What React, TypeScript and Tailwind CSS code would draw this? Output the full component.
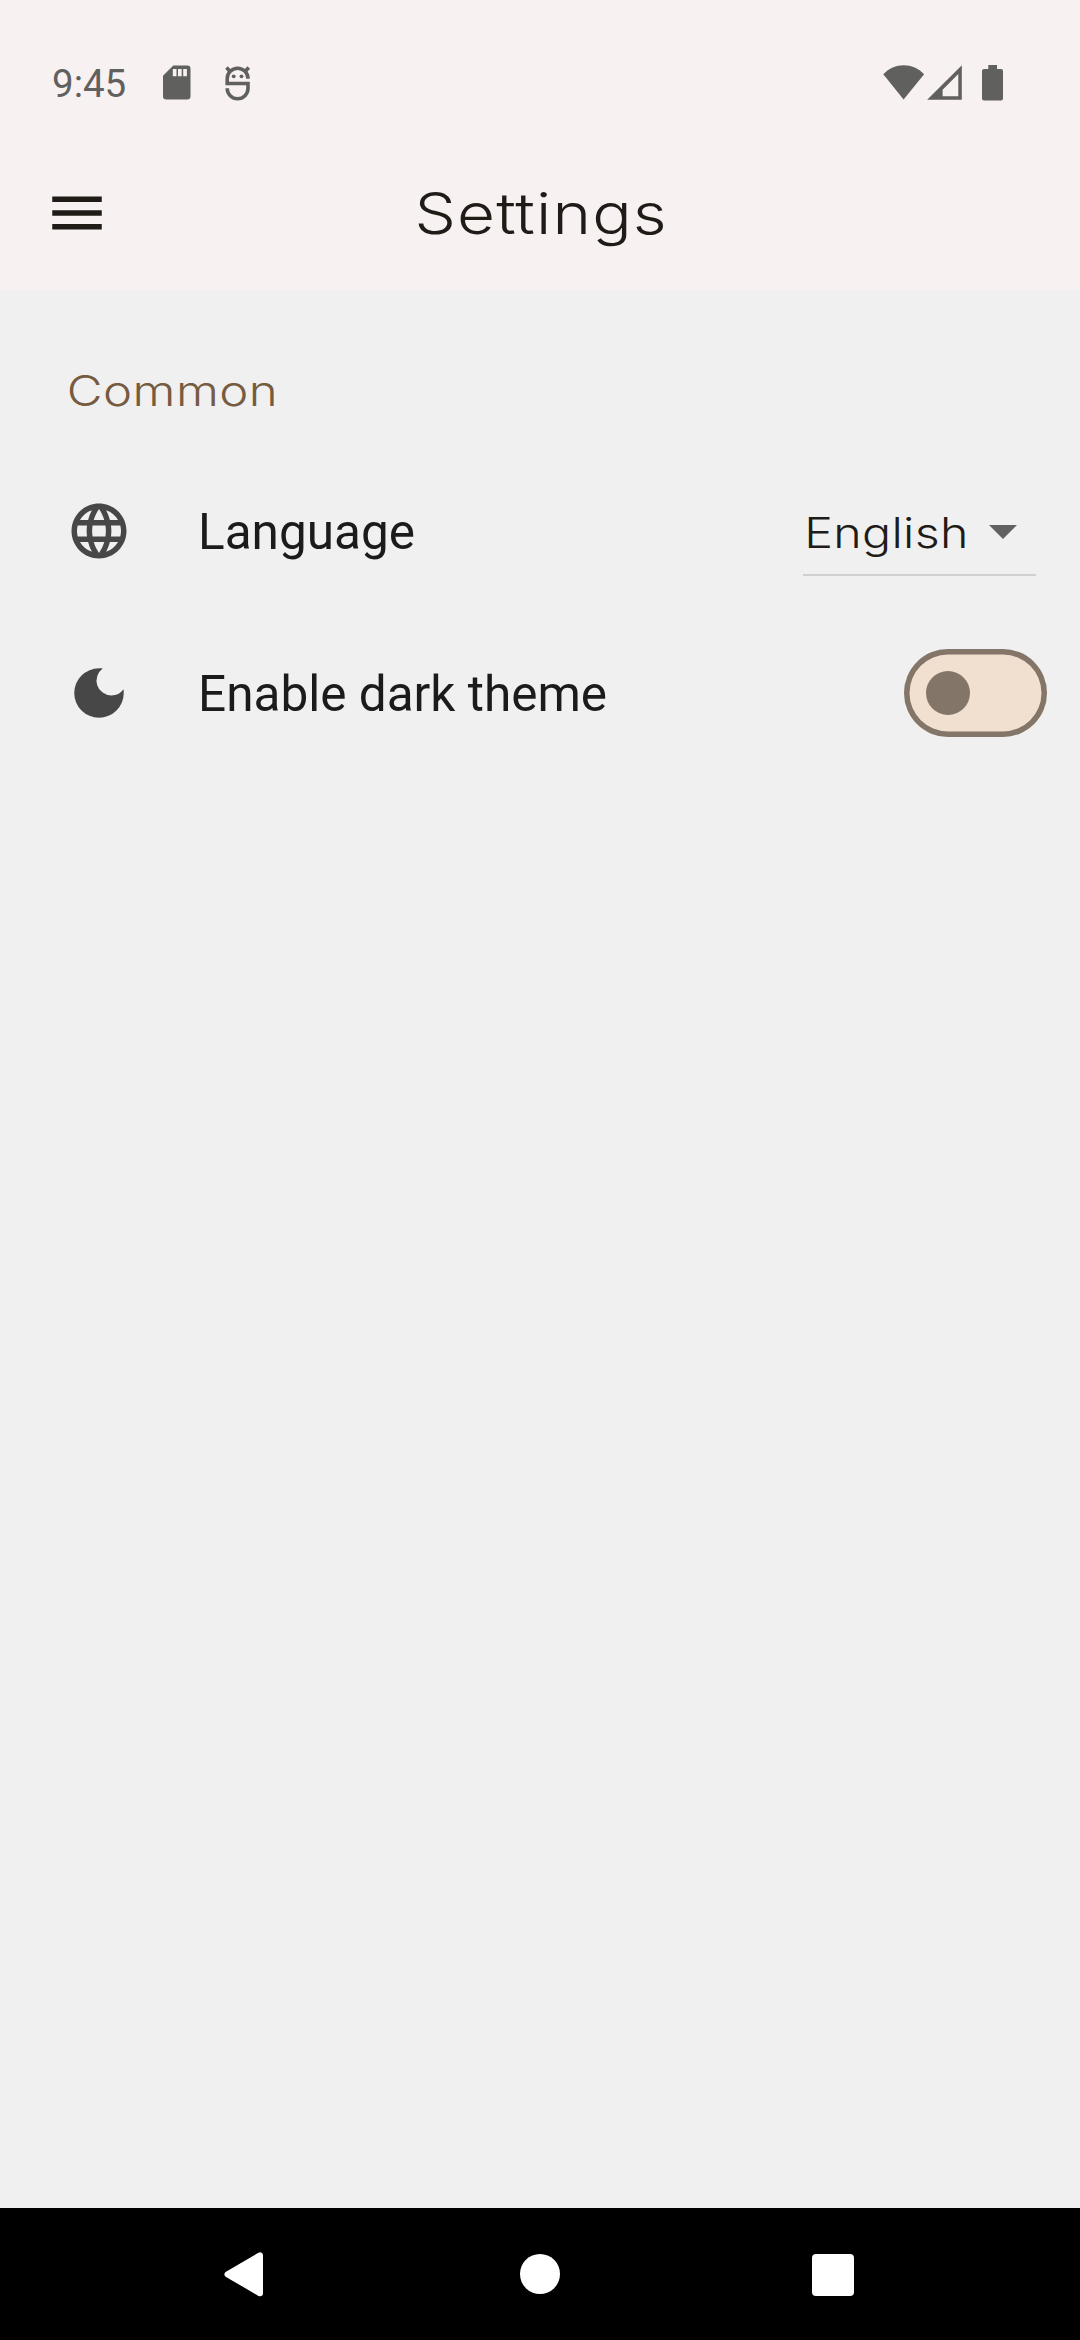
import { useState } from 'react';

function StatusBar() {
  return (
    <div className="flex h-[132px] items-start pt-[58px] pl-[52px] text-[#60605e]">
      <span className="w-[96px] font-[Roboto,sans-serif] text-[38.5px] leading-[52px]">9:45</span>
      <svg className="mt-[4px] ml-[7px] h-[42px] w-[42px]" viewBox="0 0 42 42" fill="currentColor">
        <path fillRule="evenodd" d="M18.3 3.5h14a3.2 3.2 0 0 1 3.2 3.2v27.600a3.200 3.200 0 0 1-3.200 3.200H11.200A3.200 3.200 0 0 1 8 34.300V13.800ZM17.800 7v7.200h3.700V7Zm5.200 0v7.200h3.700V7Zm5.200 0v7.200h3.700V7Z" />
      </svg>
      <svg className="mt-[7px] ml-[25px] h-[38px] w-[30px]" viewBox="0 0 30 38" fill="none" stroke="currentColor" strokeWidth="3.600">
        <path d="M26 13.700A10.400 10.400 0 0 0 5.200 13.700V18.500H26V23.300A10.400 10.400 0 0 1 5.200 23.300" />
        <path d="M4.500 2.500 8 6.500M26.700 2.500 23.200 6.500" />
        <circle cx="11.700" cy="11.300" r="1.900" fill="currentColor" stroke="none" />
        <circle cx="19.500" cy="11.300" r="1.900" fill="currentColor" stroke="none" />
      </svg>
      <svg className="mt-[7px] ml-auto h-[36px] w-[42px]" viewBox="0 0 42 36" fill="currentColor">
        <path d="M.3 9.200C6 3.500 13 .3 20.600.3S35.500 3.500 41.100 9.200L20.600 34.400Z" />
      </svg>
      <svg className="mt-[7px] ml-[2px] h-[36px] w-[36px]" viewBox="0 0 36 36" fill="currentColor">
        <path fillRule="evenodd" d="M34.800.2V34.800H.2ZM31.300 9 15.600 24.700V31.300H31.300Z" />
      </svg>
      <svg className="mt-[7px] mr-[76px] ml-[19px] h-[36px] w-[22px]" viewBox="0 0 22 36" fill="currentColor">
        <path d="M6.300 0H15V4H19a2 2 0 0 1 2 2V33.500a2 2 0 0 1-2 2H2a2 2 0 0 1-2-2V6A2 2 0 0 1 2 4H6.300Z" />
      </svg>
    </div>
  );
}

function AppBar() {
  return (
    <header className="grid h-[158px] grid-cols-[132px_1fr_132px] items-center text-[#1f1b16]">
      <button aria-label="Open menu" className="mt-[4px] ml-[44px] h-[66px] w-[66px]">
        <svg viewBox="0 0 24 24" fill="currentColor" className="h-full w-full">
          <path d="M3 18h18v-2H3v2zm0-5h18v-2H3v2zm0-7v2h18V6H3z" />
        </svg>
      </button>
      <h1 className="mt-[5px] scale-x-115 pl-[2px] text-center font-[Inter,sans-serif] text-[57px] leading-[70px] font-light tracking-[1px] whitespace-nowrap">
        Settings
      </h1>
    </header>
  );
}

function LanguageRow() {
  return (
    <div className="flex h-[162px] items-center pr-[44px] pl-[66px]">
      <svg viewBox="0 0 24 24" fill="#474747" className="h-[66px] w-[66px]">
        <path d="M11.990 2C6.470 2 2 6.480 2 12s4.470 10 9.990 10C17.520 22 22 17.520 22 12S17.520 2 11.990 2zm6.930 6h-2.950a15.650 15.650 0 0 0-1.380-3.560A8.030 8.030 0 0 1 18.920 8zM12 4.040c.83 1.200 1.480 2.530 1.910 3.960h-3.820c.43-1.430 1.080-2.760 1.910-3.960zM4.260 14C4.100 13.360 4 12.690 4 12s.1-1.360.26-2h3.380c-.08.66-.14 1.320-.14 2s.06 1.340.14 2H4.260zm.82 2h2.950c.32 1.250.78 2.450 1.380 3.560A7.987 7.987 0 0 1 5.080 16zm2.950-8H5.080a7.987 7.987 0 0 1 4.330-3.560A15.650 15.650 0 0 0 8.030 8zM12 19.960c-.83-1.200-1.480-2.530-1.910-3.960h3.820c-.43 1.430-1.080 2.760-1.910 3.960zM14.340 14H9.660c-.09-.66-.16-1.320-.16-2s.07-1.350.16-2h4.680c.09.65.16 1.320.16 2s-.07 1.340-.16 2zm.25 5.560c.6-1.110 1.060-2.310 1.380-3.560h2.950a8.030 8.030 0 0 1-4.330 3.560zM16.360 14c.08-.66.14-1.320.14-2s-.06-1.340-.14-2h3.380c.16.64.26 1.310.26 2s-.1 1.360-.26 2h-3.380z" />
      </svg>
      <span className="mt-[1px] ml-[66px] font-[Roboto,sans-serif] text-[49.5px] leading-[66px] text-[#1b1b1b]">Language</span>
      <button className="mt-[2px] ml-auto flex h-[88px] w-[233px] items-center border-b-2 border-[#d0d0d0]">
        <span className="mt-[3px] w-[160px] origin-left scale-x-115 pl-[1px] text-left font-[Inter,sans-serif] text-[42px] leading-[60px] font-light tracking-[0.3px] text-[#1f1b16]">
          English
        </span>
        <svg viewBox="0 0 28 14" fill="#616161" className="mt-[2px] ml-[26px] h-[14px] w-[28px]">
          <path d="M0 0h28L14 14z" />
        </svg>
      </button>
    </div>
  );
}

function ThemeRow() {
  const [dark, setDark] = useState(false);
  return (
    <div className="flex h-[162px] items-center pr-[33px] pl-[66px]">
      <svg viewBox="0 0 24 24" fill="#474747" className="h-[66px] w-[66px]">
        <path d="M12 3a9 9 0 1 0 9 9c0-.46-.04-.92-.1-1.360a5.389 5.389 0 0 1-4.400 2.260 5.403 5.403 0 0 1-3.140-9.800c-.44-.06-.9-.1-1.360-.1z" />
      </svg>
      <span className="mt-[1px] ml-[66px] font-[Roboto,sans-serif] text-[49.5px] leading-[66px] text-[#1b1b1b]">Enable dark theme</span>
      <button
        role="switch"
        aria-checked={dark}
        aria-label="Enable dark theme"
        onClick={() => setDark(!dark)}
        className={`ml-auto flex h-[88px] w-[143px] items-center rounded-full bg-[#f1dfd0] px-[22px] shadow-[inset_0_0_0_5.5px_#837567] ${dark ? 'justify-end' : ''}`}
      >
        <span className="h-[44px] w-[44px] rounded-full bg-[#837567]" />
      </button>
    </div>
  );
}

function NavigationBar() {
  return (
    <nav className="flex h-[132px] bg-black pt-[44px] pl-[224px]">
      <svg className="h-[46px] w-[40px]" viewBox="0 0 40 46" fill="white" stroke="white" strokeWidth="6" strokeLinejoin="round">
        <path d="M36 3.300V41.300L3.500 22.300Z" />
      </svg>
      <span className="mt-[2px] ml-[256px] h-[40px] w-[40px] rounded-full bg-white" />
      <span className="mt-[2px] ml-[252px] h-[41.500px] w-[41.500px] rounded-[4px] bg-white" />
    </nav>
  );
}

export default function App() {
  return (
    <div className="flex h-[2340px] w-[1080px] flex-col overflow-hidden bg-[#f0f0f0]">
      <div className="bg-[#f7f1f1]">
        <StatusBar />
        <AppBar />
      </div>
      <main className="flex-1 pt-[71px]">
        <h2 className="w-[300px] origin-left scale-x-117 pl-[57px] font-[Inter,sans-serif] text-[42px] leading-[60px] font-light tracking-[0.4px] text-[#755b40]">
          Common
        </h2>
        <div className="mt-[29px]">
          <LanguageRow />
          <ThemeRow />
        </div>
      </main>
      <NavigationBar />
    </div>
  );
}
